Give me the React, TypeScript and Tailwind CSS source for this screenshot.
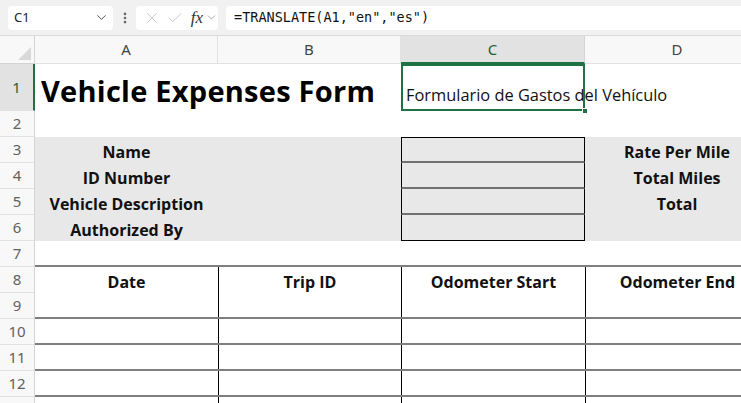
import { ChevronDown, X, Check, EllipsisVertical } from 'lucide-react'

const ui = { fontFamily: '"Noto Sans", "Open Sans", sans-serif' }
const cell = { fontFamily: '"Open Sans", "Noto Sans", sans-serif' }

function RowHead({ n, active = false, h = 'h-[26px]' }: { n?: number; active?: boolean; h?: string }) {
  return (
    <div
      className={`${h} w-[35px] shrink-0 flex items-center justify-center border-b border-[#e1e1e1] text-[15px] ${
        active ? 'bg-[#e2e2e2] text-[#1c5e3a] border-r-2 border-r-[#1f7244]' : 'bg-[#f8f8f8] text-[#616161] border-r border-r-[#d4d4d4]'
      }`}
      style={ui}
    >
      {n}
    </div>
  )
}

export default function App() {
  return (
    <div className="w-[741px] h-[403px] overflow-hidden bg-white select-none">
      {/* formula bar */}
      <div className="h-[36px] bg-[#f1f1f1] flex items-center pl-2 gap-0 border-b border-[#dcdcdc]" style={ui}>
        <div className="w-[105px] h-[24px] bg-white rounded flex items-center justify-between pl-[6px] pr-[4px] text-[13px] text-[#222]">
          <span>C1</span>
          <ChevronDown size={15} strokeWidth={1.6} className="text-[#555]" />
        </div>
        <div className="w-[23px] flex justify-center">
          <EllipsisVertical size={14} strokeWidth={2.5} className="text-[#666]" />
        </div>
        <div className="w-[82px] h-[24px] bg-white rounded flex items-center pl-[7px] text-[#c4c4c4]">
          <X size={18} strokeWidth={1.2} />
          <Check size={18} strokeWidth={1.2} className="ml-[5px]" />
          <span className="ml-[7px] text-[17px] italic text-[#333] leading-none" style={{ fontFamily: '"Liberation Serif", serif' }}>
            fx
          </span>
          <ChevronDown size={13} strokeWidth={1.4} className="ml-[2px] text-[#888]" />
        </div>
        <div
          className="ml-[8px] flex-1 h-[24px] bg-white rounded-l flex items-center pl-[8px] text-[13.5px] text-[#111]"
          style={{ fontFamily: '"DejaVu Sans Mono", "Liberation Mono", monospace' }}
        >
          =TRANSLATE(A1,"en","es")
        </div>
      </div>

      {/* column headers */}
      <div className="flex h-[28px] text-[15px] text-[#444]" style={ui}>
        <div className="w-[35px] shrink-0 bg-[#f8f8f8] border-r border-b border-[#d4d4d4] relative">
          <div className="absolute right-[3px] bottom-[3px] w-0 h-0 border-l-[13px] border-l-transparent border-b-[13px] border-b-[#d9d9d9]" />
        </div>
        <div className="w-[183px] shrink-0 bg-[#f8f8f8] border-r border-b border-[#e1e1e1] flex items-center justify-center">A</div>
        <div className="w-[183px] shrink-0 bg-[#f8f8f8] border-r border-b border-[#e1e1e1] flex items-center justify-center">B</div>
        <div className="w-[184px] shrink-0 bg-[#e2e2e2] border-r border-[#d4d4d4] border-b-2 border-b-[#1f7244] flex items-center justify-center text-[#1c5e3a]">C</div>
        <div className="w-[184px] shrink-0 bg-[#f8f8f8] border-b border-[#e1e1e1] flex items-center justify-center">D</div>
      </div>

      {/* row 1 */}
      <div className="flex h-[47px]">
        <RowHead n={1} active h="h-[47px]" />
        <div className="w-[366px] shrink-0 flex items-end pl-[6px] pb-[6px]">
          <span className="text-[29px] font-bold text-black leading-none whitespace-nowrap tracking-[0.25px]" style={cell}>
            Vehicle Expenses Form
          </span>
        </div>
        <div className="w-[184px] shrink-0 relative flex items-end pl-[5px] pb-[8px]">
          <span className="text-[16.4px] text-[#111] leading-none whitespace-nowrap relative z-0" style={cell}>
            Formulario de Gastos del Vehículo
          </span>
          <div className="absolute inset-0 border-2 border-[#1f7244] z-10" />
          <div className="absolute right-[-3px] bottom-[-3px] w-[6px] h-[6px] bg-[#1f7244] border border-white z-20" />
        </div>
      </div>

      {/* row 2 */}
      <div className="flex">
        <RowHead n={2} />
      </div>

      {/* rows 3-6 */}
      {[
        ['Name', 'Rate Per Mile'],
        ['ID Number', 'Total Miles'],
        ['Vehicle Description', 'Total'],
        ['Authorized By', ''],
      ].map(([a, d], i) => (
        <div key={a} className="flex">
          <RowHead n={i + 3} />
          <div className="flex bg-[#e8e8e8] text-[16px] font-bold text-[#111]" style={cell}>
            <div className="w-[183px] h-[26px] flex items-center justify-center pt-[3px]">{a}</div>
            <div className="w-[183px] h-[26px]" />
            <div
              className={`w-[184px] h-[26px] border-x border-black ${i === 0 ? 'border-t border-t-black' : ''} ${
                i === 3 ? 'border-b border-b-black' : 'border-b-2 border-b-[#707070]'
              }`}
            />
            <div className="w-[184px] h-[26px] flex items-center justify-center pt-[3px]">{d}</div>
          </div>
        </div>
      ))}

      {/* row 7 */}
      <div className="flex">
        <RowHead n={7} />
        <div className="w-[734px] h-[26px] border-b-2 border-[#7f7f7f]" />
      </div>

      {/* rows 8-12 */}
      {[8, 9, 10, 11, 12].map((n) => (
        <div key={n} className="flex">
          <RowHead n={n} />
          <div
            className={`flex text-[16px] font-bold text-[#111] ${n === 8 ? '' : 'border-b-2 border-[#7f7f7f]'} h-[26px]`}
            style={cell}
          >
            <div className="w-[183px] flex items-center justify-center pt-[3px]">{n === 8 ? 'Date' : ''}</div>
            <div className="w-[183px] border-l border-black flex items-center justify-center pt-[3px]">{n === 8 ? 'Trip ID' : ''}</div>
            <div className="w-[184px] border-l border-black flex items-center justify-center pt-[3px]">{n === 8 ? 'Odometer Start' : ''}</div>
            <div className="w-[184px] border-l border-black flex items-center justify-center pt-[3px]">{n === 8 ? 'Odometer End' : ''}</div>
          </div>
        </div>
      ))}

      {/* row 13, cut off by the window */}
      <div className="flex">
        <RowHead />
        <div className="flex h-[26px]">
          <div className="w-[183px]" />
          <div className="w-[183px] border-l border-black" />
          <div className="w-[184px] border-l border-black" />
          <div className="w-[184px] border-l border-black" />
        </div>
      </div>
    </div>
  )
}
